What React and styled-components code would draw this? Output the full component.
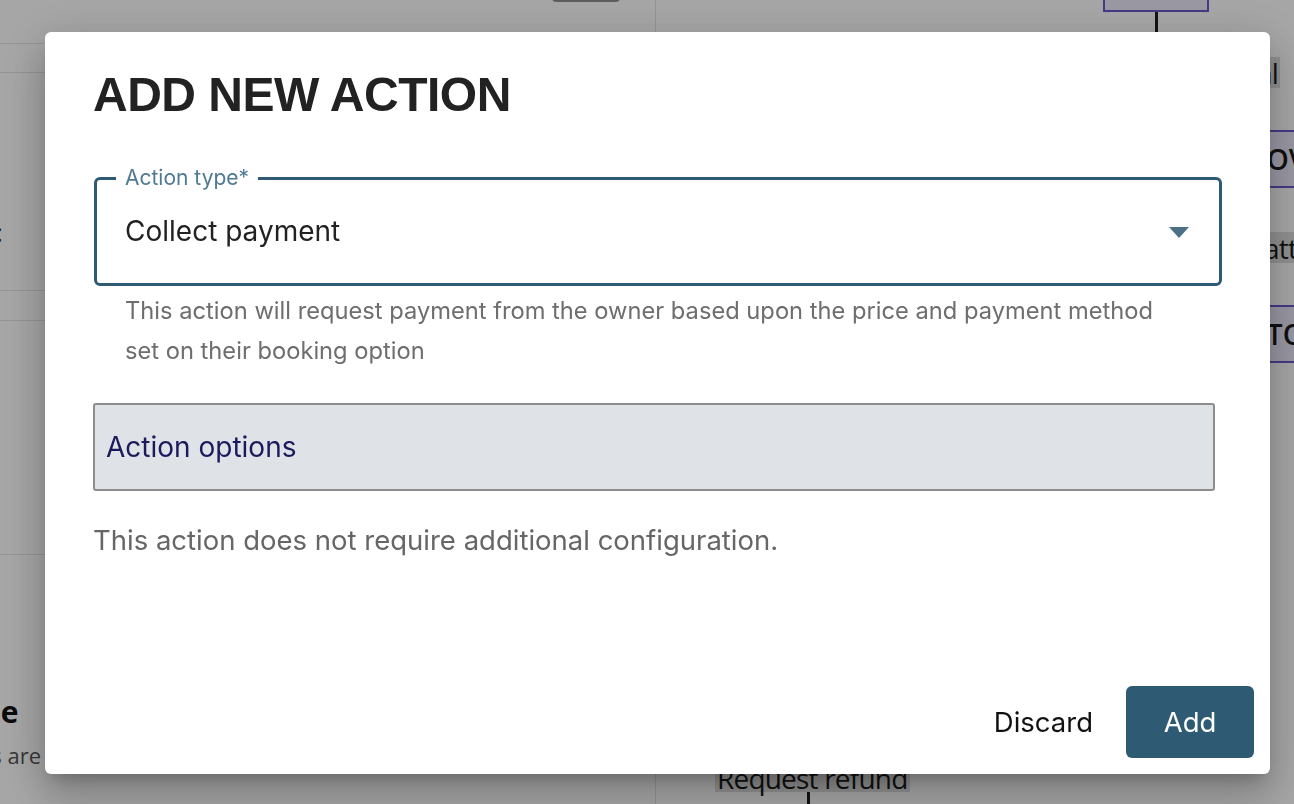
import React from "react";
import styled, { createGlobalStyle } from "styled-components";

const GlobalStyle = createGlobalStyle`
  html, body {
    margin: 0;
    padding: 0;
    overflow: hidden;
  }
  body {
    font-family: Inter, "Noto Sans", sans-serif;
    color: #222;
  }
  * {
    box-sizing: border-box;
  }
`;

const Page = styled.div`
  position: relative;
  display: flex;
  width: 100vw;
  height: 100vh;
  background: #ffffff;
  overflow: hidden;
`;

const SidePanel = styled.div`
  display: flex;
  flex-direction: column;
  width: 656px;
  flex-shrink: 0;
  border-right: 1px solid #e2e2e2;
  font-family: "Open Sans", sans-serif;
`;

const Toolbar = styled.div`
  display: flex;
  justify-content: flex-end;
  align-items: flex-end;
  height: 2px;
  padding-right: 35px;
`;

const ToolbarButton = styled.div`
  width: 68px;
  height: 30px;
  border-radius: 4px;
  background: #909090;
  flex-shrink: 0;
`;

const PanelRow = styled.div`
  display: flex;
  align-items: ${({ align }) => align || "center"};
  height: ${({ h }) => h}px;
  border-bottom: 1px solid #e4e4e4;
  padding-bottom: ${({ padBottom }) => padBottom || 0}px;
  font-size: 26px;
  color: #222;
`;

const RowText = styled.span`
  margin-left: -4px;
`;

const PanelFooter = styled.div`
  display: flex;
  flex-direction: column;
  padding-top: 136px;
  gap: 8px;
`;

const PanelHeading = styled.div`
  font-size: 30px;
  font-weight: 700;
  color: #111;
  margin-left: -230px;
  white-space: nowrap;
`;

const PanelNote = styled.div`
  font-size: 22px;
  color: #555;
  margin-left: -192px;
  white-space: nowrap;
`;

const Canvas = styled.div`
  position: relative;
  flex: 1;
  font-family: "Open Sans", sans-serif;
`;

const Node = styled.div`
  position: absolute;
  display: flex;
  align-items: center;
  padding-left: 6px;
  border: 2px solid #6b58cf;
  background: #eceafb;
  font-size: 28px;
  font-weight: 600;
  color: #1a1a1a;
  white-space: nowrap;
`;

const Chip = styled.div`
  position: absolute;
  display: flex;
  align-items: center;
  padding: 0 2px;
  background: #dedede;
  font-size: 28px;
  color: #1a1a1a;
  white-space: nowrap;
  letter-spacing: -0.8px;
`;

const Connector = styled.div`
  position: absolute;
  width: 3px;
  background: #1e1e1e;
`;

const Overlay = styled.div`
  position: fixed;
  inset: 0;
  display: flex;
  align-items: flex-start;
  padding: 32px 0 0 45px;
  background: rgba(0, 0, 0, 0.35);
`;

const Dialog = styled.div`
  display: flex;
  flex-direction: column;
  width: 1225px;
  height: 742px;
  background: #ffffff;
  border-radius: 6px;
  box-shadow: 0 11px 15px -7px rgba(0, 0, 0, 0.2),
    0 24px 38px 3px rgba(0, 0, 0, 0.14), 0 9px 46px 8px rgba(0, 0, 0, 0.12);
`;

const Body = styled.div`
  display: flex;
  flex-direction: column;
  padding: 35px 48px 0 48px;
`;

const Title = styled.h2`
  margin: 0;
  font-family: "Liberation Sans", Arial, sans-serif;
  font-size: 48px;
  line-height: 56px;
  font-weight: 700;
  letter-spacing: -0.5px;
  color: #222222;
`;

const SelectBox = styled.fieldset`
  margin: 44px 0 0 1px;
  padding: 0 28px 10px 28px;
  border: 3px solid #2e5b73;
  border-radius: 6px;
  min-width: 0;
`;

const SelectLabel = styled.legend`
  margin-left: -9px;
  padding: 0 9px;
  font-size: 21px;
  line-height: 22px;
  color: #4f7a93;
`;

const SelectValue = styled.div`
  display: flex;
  align-items: center;
  justify-content: space-between;
  height: 84px;
  font-size: 28px;
  color: #222222;
`;

const Caret = styled.svg`
  width: 20px;
  height: 11px;
  margin-right: 2px;
  margin-top: 2px;
  fill: #4b7189;
`;

const Helper = styled.p`
  margin: 5px 0 0 32px;
  max-width: 1055px;
  font-size: 23.7px;
  line-height: 40px;
  color: #6e6e6e;
`;

const OptionsBar = styled.div`
  display: flex;
  align-items: center;
  height: 88px;
  margin: 32px 7px 0 0;
  padding: 0 11px;
  background: #dfe2e7;
  border: 2px solid #8d8d8d;
  border-radius: 3px;
  font-size: 28px;
  color: #1b1a5c;
`;

const Note = styled.p`
  margin: 31px 0 0 0;
  font-size: 27.5px;
  line-height: 36px;
  color: #666666;
`;

const Footer = styled.div`
  display: flex;
  justify-content: flex-end;
  align-items: center;
  gap: 17px;
  margin-top: auto;
  padding: 0 16px 16px 0;
`;

const Button = styled.button`
  display: flex;
  align-items: center;
  justify-content: center;
  height: 72px;
  min-width: ${({ primary }) => (primary ? "128px" : "0")};
  padding: 0 16px;
  border: none;
  border-radius: 6px;
  background: ${({ primary }) => (primary ? "#2e5b73" : "transparent")};
  color: ${({ primary }) => (primary ? "#ffffff" : "#111111")};
  font-family: Inter, "Noto Sans", sans-serif;
  font-size: 27.5px;
  cursor: pointer;
`;

const App = () => {
  return (
    <>
      <GlobalStyle />
      <Page>
        <SidePanel>
          <Toolbar>
            <ToolbarButton />
          </Toolbar>
          <PanelRow h={42} />
          <PanelRow h={29} />
          <PanelRow h={218} align="flex-end" padBottom={40}>
            <RowText>:</RowText>
          </PanelRow>
          <PanelRow h={30} />
          <PanelRow h={234} />
          <PanelFooter>
            <PanelHeading>Service schedule</PanelHeading>
            <PanelNote>Automated actions are</PanelNote>
          </PanelFooter>
        </SidePanel>
        <Canvas>
          <Node style={{ left: 447, top: -30, width: 106, height: 42 }} />
          <Connector style={{ left: 499, top: 12, height: 60 }} />
          <Chip style={{ right: 14, top: 57, height: 31 }}>Manual</Chip>
          <Node style={{ left: 532, top: 130, width: 160, height: 58 }}>
            APPROVAL
          </Node>
          <Chip style={{ left: 606, top: 232, height: 31 }}>attendance</Chip>
          <Node style={{ left: 555, top: 305, width: 160, height: 58 }}>
            MOTORS
          </Node>
          <Chip style={{ left: 59, top: 763, height: 29 }}>Request refund</Chip>
          <Connector style={{ left: 151, top: 792, height: 20 }} />
        </Canvas>

        <Overlay>
          <Dialog role="dialog" aria-labelledby="add-action-title">
            <Body>
              <Title id="add-action-title">ADD NEW ACTION</Title>
              <SelectBox>
                <SelectLabel>Action type*</SelectLabel>
                <SelectValue>
                  <span>Collect payment</span>
                  <Caret viewBox="0 0 20 11">
                    <path d="M0 0 L20 0 L10 11 Z" />
                  </Caret>
                </SelectValue>
              </SelectBox>
              <Helper>
                This action will request payment from the owner based upon the
                price and payment method set on their booking option
              </Helper>
              <OptionsBar>Action options</OptionsBar>
              <Note>This action does not require additional configuration.</Note>
            </Body>
            <Footer>
              <Button>Discard</Button>
              <Button primary>Add</Button>
            </Footer>
          </Dialog>
        </Overlay>
      </Page>
    </>
  );
};

export default App;
